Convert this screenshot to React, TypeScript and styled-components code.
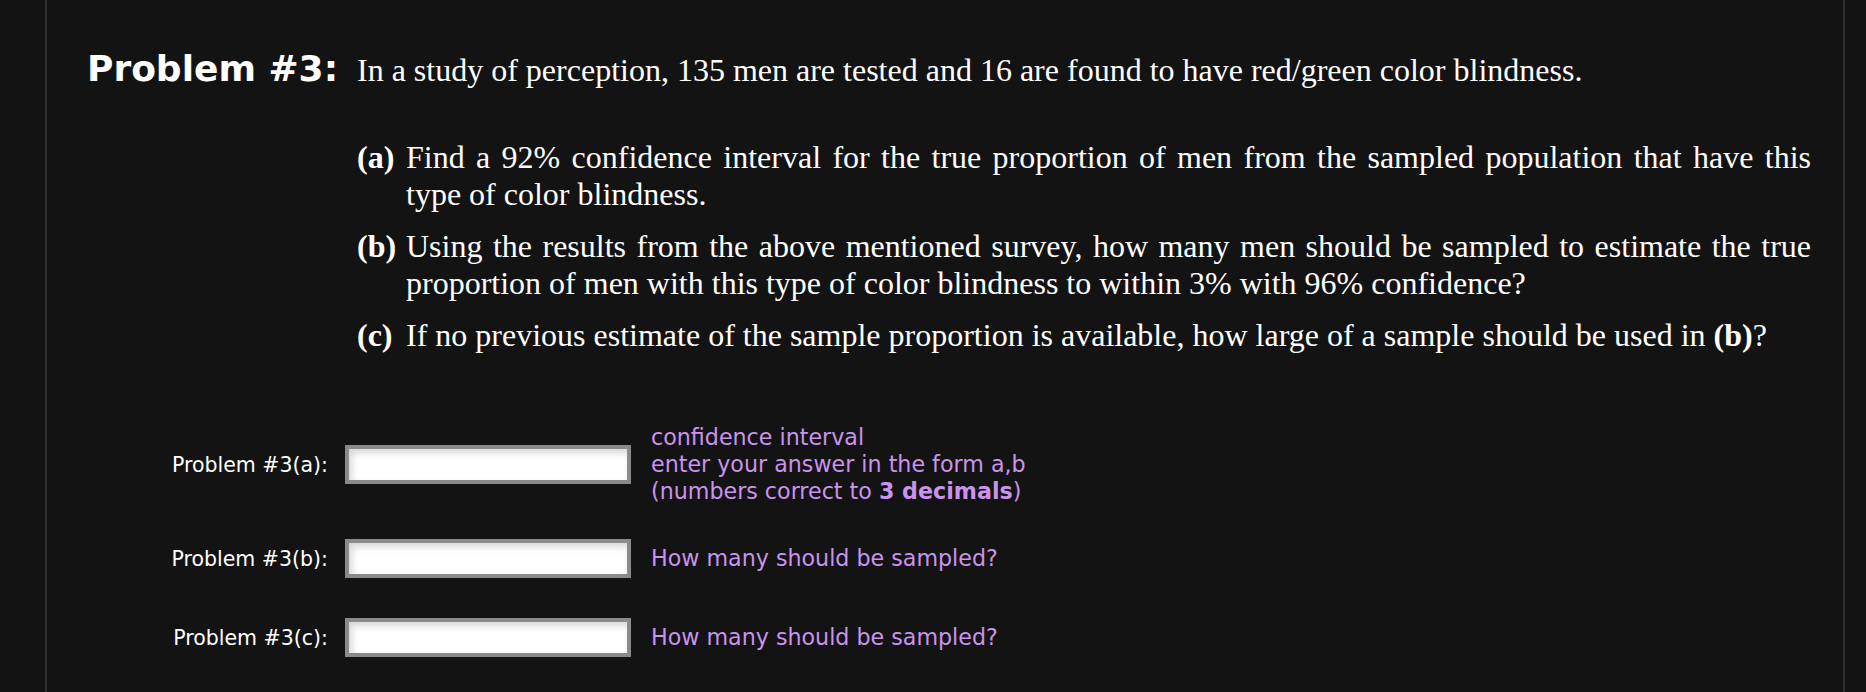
import styled, { createGlobalStyle } from "styled-components";

const GlobalStyle = createGlobalStyle`
  html, body {
    margin: 0;
    padding: 0;
    background: #131313;
  }
`;

const Page = styled.div`
  margin-left: 45px;
  width: 1800px;
  min-height: 692px;
  box-sizing: border-box;
  border-left: 2px solid #2e2e2e;
  border-right: 2px solid #2e2e2e;
  padding: 48px 32px 0 40px;
`;

const Problem = styled.section`
  display: grid;
  grid-template-columns: 270px 1454px;
  align-items: baseline;
`;

const Title = styled.h2`
  margin: 0;
  font-family: "DejaVu Sans", Verdana, sans-serif;
  font-weight: bold;
  font-size: 36px;
  line-height: 42px;
  color: #ffffff;
`;

const Statement = styled.div`
  font-family: "Liberation Serif", "Times New Roman", serif;
  font-size: 32px;
  line-height: 37px;
  color: #ffffff;
`;

const Intro = styled.p`
  margin: 0;
`;

const Parts = styled.ol`
  list-style: none;
  margin: 50px 0 0;
  padding: 0;
  display: flex;
  flex-direction: column;
  gap: 15px;
`;

const Part = styled.li`
  display: grid;
  grid-template-columns: 49px 1fr;
`;

const PartMark = styled.b`
  font-weight: bold;
`;

const PartText = styled.span`
  text-align: justify;
`;

const Answers = styled.div`
  margin-top: 70px;
  margin-left: -40px;
  display: flex;
  flex-direction: column;
`;

const AnswerRow = styled.div<{ $top: number }>`
  display: grid;
  grid-template-columns: 281px 286px 1fr;
  column-gap: 17px;
  align-items: center;
  margin-top: ${(p) => p.$top}px;

  & > :last-child {
    margin-left: 3px;
  }
`;

const Label = styled.label`
  text-align: right;
  font-family: "DejaVu Sans", Verdana, sans-serif;
  font-size: 20.5px;
  color: #ffffff;
`;

const AnswerInput = styled.input`
  box-sizing: border-box;
  width: 286px;
  height: 39px;
  margin: 0;
  padding: 0 8px;
  border: 4px solid #8a8a8a;
  background: #ffffff;
  box-shadow: inset 3px 4px 7px rgba(0, 0, 0, 0.16);
  font-family: "DejaVu Sans", Verdana, sans-serif;
  font-size: 20px;
  outline: none;
`;

const Hint = styled.div`
  font-family: "DejaVu Sans", Verdana, sans-serif;
  font-size: 22.2px;
  line-height: 27px;
  color: #c993ee;

  b {
    font-weight: bold;
  }
`;

const rows = [
  {
    id: "a",
    top: 0,
    hint: (
      <>
        confidence interval
        <br />
        enter your answer in the form a,b
        <br />
        (numbers correct to <b>3 decimals</b>)
      </>
    ),
  },
  { id: "b", top: 34, hint: <>How many should be sampled?</> },
  { id: "c", top: 40, hint: <>How many should be sampled?</> },
];

export default function App() {
  return (
    <>
      <GlobalStyle />
      <Page>
        <Problem>
          <Title>Problem #3:</Title>
          <Statement>
            <Intro>
              In a study of perception, 135 men are tested and 16 are found to
              have red/green color blindness.
            </Intro>
            <Parts>
              <Part>
                <PartMark>(a)</PartMark>
                <PartText>
                  Find a 92% confidence interval for the true proportion of men
                  from the sampled population that have this type of color
                  blindness.
                </PartText>
              </Part>
              <Part>
                <PartMark>(b)</PartMark>
                <PartText>
                  Using the results from the above mentioned survey, how many
                  men should be sampled to estimate the true proportion of men
                  with this type of color blindness to within 3% with 96%
                  confidence?
                </PartText>
              </Part>
              <Part>
                <PartMark>(c)</PartMark>
                <PartText>
                  If no previous estimate of the sample proportion is available,
                  how large of a sample should be used in <b>(b)</b>?
                </PartText>
              </Part>
            </Parts>
          </Statement>
        </Problem>
        <Answers>
          {rows.map((r) => (
            <AnswerRow key={r.id} $top={r.top}>
              <Label htmlFor={`ans-${r.id}`}>Problem #3({r.id}):</Label>
              <AnswerInput id={`ans-${r.id}`} type="text" />
              <Hint>{r.hint}</Hint>
            </AnswerRow>
          ))}
        </Answers>
      </Page>
    </>
  );
}
